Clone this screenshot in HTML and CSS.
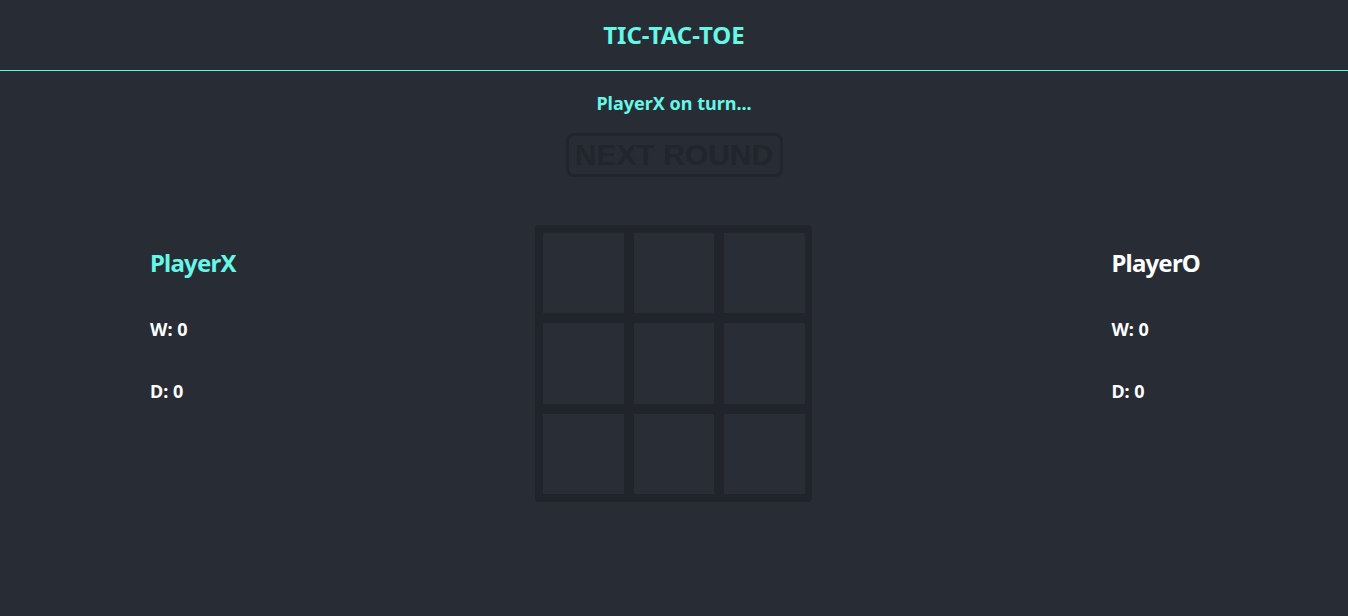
FILE: index.html
```html
<!DOCTYPE html>
<html lang="en">
<head>
<meta charset="utf-8">
<title>Tic-Tac-Toe</title>
<link rel="stylesheet" href="styles.css">
</head>
<body>
<header class="header">
  <h1 class="title">TIC-TAC-TOE</h1>
</header>
<main class="main">
  <p class="status">PlayerX on turn...</p>
  <button class="next-btn" type="button">NEXT ROUND</button>
  <section class="game">
    <div class="player player-active">
      <h2 class="player-name">PlayerX</h2>
      <p class="stat">W: 0</p>
      <p class="stat">D: 0</p>
    </div>
    <div class="board">
      <div class="cell"></div><div class="cell"></div><div class="cell"></div>
      <div class="cell"></div><div class="cell"></div><div class="cell"></div>
      <div class="cell"></div><div class="cell"></div><div class="cell"></div>
    </div>
    <div class="player">
      <h2 class="player-name">PlayerO</h2>
      <p class="stat">W: 0</p>
      <p class="stat">D: 0</p>
    </div>
  </section>
</main>
</body>
</html>
```
FILE: styles.css
```css
* { box-sizing: border-box; }
html, body {
  margin: 0;
  padding: 0;
  background: #282c35;
  color: #ffffff;
  font-family: "Noto Sans", "Open Sans", sans-serif;
  height: 100%;
}
.header {
  height: 71px;
  border-bottom: 1px solid #62f4e4;
  display: flex;
  align-items: center;
  justify-content: center;
}
.title {
  margin: 0;
  font-size: 24px;
  font-weight: 700;
  color: #66f7e6;
  line-height: 1;
}
.main {
  display: flex;
  flex-direction: column;
  align-items: center;
}
.status {
  margin: 20px 0 0;
  font-size: 18px;
  font-weight: 700;
  color: #66f7e6;
  line-height: 24px;
}
.next-btn {
  margin-top: 18px;
  width: 217px;
  height: 44px;
  border: 3px solid #21252c;
  border-radius: 8px;
  background: transparent;
  color: #21252c;
  font-family: "Liberation Sans", Arial, sans-serif;
  font-weight: 700;
  font-size: 30px;
  padding: 0;
  line-height: 1;
}
.game {
  margin-top: 48px;
  width: 100%;
  padding: 0 148px 0 150px;
  display: flex;
  justify-content: space-between;
  align-items: flex-start;
}
.player {
  display: flex;
  flex-direction: column;
}
.player-name {
  margin: 24px 0 0;
  font-size: 24px;
  font-weight: 700;
  line-height: 28px;
  letter-spacing: -0.8px;
}
.player-active .player-name { color: #66f7e6; }
.stat {
  margin: 40px 0 0;
  font-size: 18px;
  font-weight: 700;
  line-height: 24px;
}
.stat + .stat { margin-top: 38px; }
.board {
  width: 277px;
  height: 277px;
  background: #21242b;
  border-radius: 4px;
  padding: 8px 7px 8px 8px;
  display: grid;
  grid-template-columns: repeat(3, 1fr);
  grid-template-rows: repeat(3, 1fr);
  gap: 10px;
}
.cell {
  background: #292d36;
}
```
